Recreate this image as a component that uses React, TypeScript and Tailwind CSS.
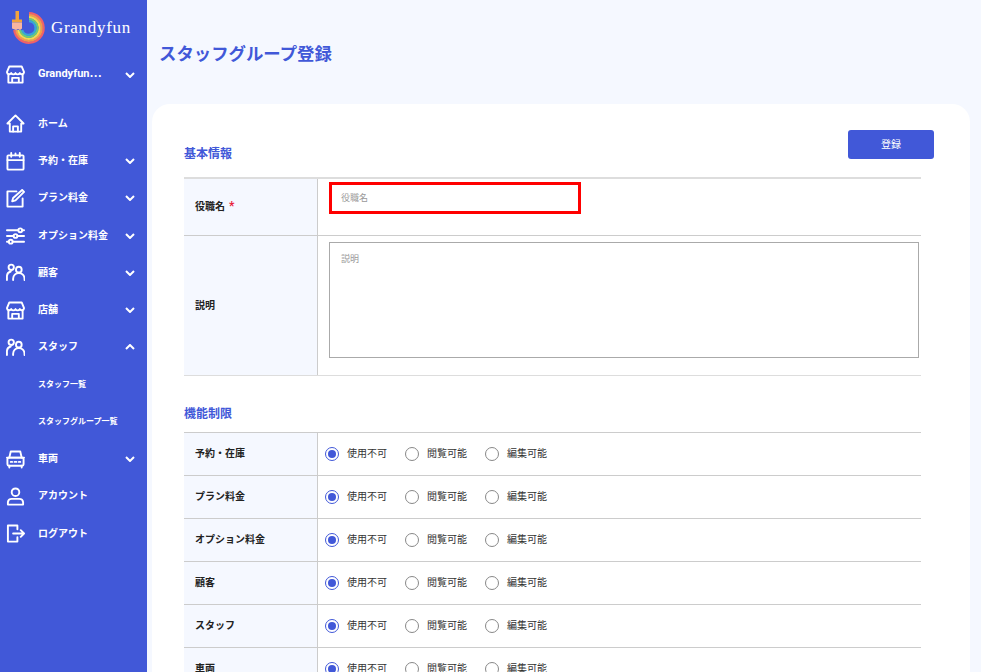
import React from "react";

const S = { fill: "none", stroke: "currentColor", strokeWidth: 2, strokeLinecap: "round" as const, strokeLinejoin: "round" as const };
const Ico = ({ children }: { children: React.ReactNode }) => (
  <svg width="19" height="19" viewBox="0 0 20 20" {...S} className="shrink-0">{children}</svg>
);
const Store = () => <Ico><path d="M3.500 1.500h13l2.500 6a2.400 2.400 0 0 1-4.500 1 2.500 2.500 0 0 1-4.500 0 2.500 2.500 0 0 1-4.500 0A2.400 2.400 0 0 1 1 7.500z" /><path d="M2.500 10v8.500h15V10M6.500 18.500v-5h7v5" /></Ico>;
const Home = () => <Ico><path d="M1.500 10 10 1.500 18.500 10H16v8.500H4V10z" /><path d="M7.500 18.500v-5.500h5v5.500" /></Ico>;
const Cal = () => <Ico><rect x="1.500" y="3.500" width="17" height="15" rx="1" /><path d="M1.500 8.500h17M5.500 1v4M14.500 1v4M10 1.500v2" /></Ico>;
const Edit = () => <Ico><path d="M17.500 10v8.500h-16v-16H11" /><path d="M17 1 19 3 10 12l-3.500 1 1-3.500z" /></Ico>;
const Sliders = () => <Ico><path d="M1 4.500h12M17 4.500h2M1 10.500h7M12 10.500h7M1 16.500h2M7 16.500h12" /><circle cx="15" cy="4.500" r="2" /><circle cx="10" cy="10.500" r="2" /><circle cx="5" cy="16.500" r="2" /></Ico>;
const People = () => <Ico><circle cx="5.500" cy="4.500" r="2.800" /><circle cx="13.500" cy="7" r="3" /><path d="M1 18v-4.500A5 5 0 0 1 5 9" /><path d="M7.500 18v-1.500a6 6 0 0 1 12 0V18" /></Ico>;
const CarI = () => <Ico><path d="M3.500 8 5 1.500h10L16.500 8" /><rect x="1.500" y="8" width="17" height="8.500" rx="1.500" /><path d="M1 8h18M3.500 16.500v2M16.500 16.500v2M5 12.500h1.500M9 12.500h2M13.500 12.500h1.500" /></Ico>;
const User = () => <Ico><circle cx="10" cy="5.500" r="4" /><path d="M2 18.500v-2.500a4 4 0 0 1 4-3.500h8a4 4 0 0 1 4 3.500v2.500z" /></Ico>;
const Logout = () => <Ico><path d="M12 5.500V1.500H2v17h10v-4.500" /><path d="M7.500 10H19M15.500 6.500 19 10l-3.500 3.500" /></Ico>;
const Chev = ({ up }: { up?: boolean }) => (
  <svg width="10" height="6" viewBox="0 0 10 6" fill="none" stroke="currentColor" strokeWidth="2" className="absolute right-[12px]">
    <path d={up ? "M1 5l4-4 4 4" : "M1 1l4 4 4-4"} />
  </svg>
);

const arc = (r: number) => {
  const cx = 29, cy = 28, a = (-5 * Math.PI) / 180;
  return `M${cx + r * Math.sin(a + 0.09)} ${cy - r * Math.cos(a + 0.09)}A${r} ${r} 0 1 1 ${cx - r} ${cy + 2}`;
};
const Logo = () => (
  <svg width="40" height="40" viewBox="10 8 40 40" className="shrink-0">
    <g fill="none" strokeWidth="2.200">
      <path d={arc(14.800)} stroke="#f0606a" />
      <path d={arc(12.800)} stroke="#f59a4a" />
      <path d={arc(10.800)} stroke="#f5d850" />
      <path d={arc(8.800)} stroke="#6ccb78" />
      <path d={arc(6.800)} stroke="#37a6d8" />
    </g>
    <rect x="15.500" y="11" width="3.500" height="9" fill="#f2a33c" />
    <rect x="12" y="19.500" width="10" height="3" fill="#f2a33c" />
    <path d="M12 22.500h10v6l-2 1.500-2-1-2 1-4-1.500z" fill="#f7b5a0" />
  </svg>
);

const nav: [string, React.ReactNode, 0 | 1 | 2][] = [
  ["ホーム", <Home />, 0],
  ["予約・在庫", <Cal />, 1],
  ["プラン料金", <Edit />, 1],
  ["オプション料金", <Sliders />, 1],
  ["顧客", <People />, 1],
  ["店舗", <Store />, 1],
  ["スタッフ", <People />, 2],
];
const nav2: [string, React.ReactNode, 0 | 1 | 2][] = [
  ["車両", <CarI />, 1],
  ["アカウント", <User />, 0],
  ["ログアウト", <Logout />, 0],
];

const Item = ({ label, icon, c, big }: { label: string; icon: React.ReactNode; c: 0 | 1 | 2; big?: boolean }) => (
  <div className="relative flex h-[37.250px] items-center pl-[6px] text-[10px] font-bold text-white">
    {icon}
    <span className={`ml-[13px] whitespace-nowrap pb-px ${big ? "text-[11px]" : ""}`}>{label}</span>
    {c ? <Chev up={c === 2} /> : null}
  </div>
);
const Sub = ({ label }: { label: string }) => (
  <div className="flex h-[37.250px] items-center pl-[38px] text-[8px] font-bold text-white whitespace-nowrap">{label}</div>
);

const Radio = ({ on, label }: { on?: boolean; label: string }) => (
  <div className="flex w-[80px] items-center text-[10px] text-[#333]">
    <span className={`flex h-[14px] w-[14px] items-center justify-center rounded-full border-[1.500px] ${on ? "border-[#4158d8]" : "border-[#888]"}`}>
      {on ? <span className="h-[8px] w-[8px] rounded-full bg-[#4158d8]" /> : null}
    </span>
    <span className="ml-[8px] mb-px whitespace-nowrap">{label}</span>
  </div>
);

const perms = ["予約・在庫", "プラン料金", "オプション料金", "顧客", "スタッフ", "車両"];

export default function App() {
  return (
    <div
      className="flex h-[672px] w-[981px] overflow-hidden bg-[#f5f8ff]"
      style={{ fontFamily: '"Roboto","Noto Sans CJK JP",sans-serif' }}
    >
      <aside className="h-full w-[147px] shrink-0 bg-[#4158d8]">
        <div className="flex h-[56px] items-center pl-[10px] pb-[1px] text-white">
          <Logo />
          <span className="ml-[1px] text-[17px] tracking-[0.700px]" style={{ fontFamily: '"Liberation Serif",serif' }}>Grandyfun</span>
        </div>
        <Item label="Grandyfun⋯" icon={<Store />} c={1} big />
        <div className="h-[12px]" />
        {nav.map(([l, i, c]) => <Item key={l} label={l} icon={i} c={c} />)}
        <Sub label="スタッフ一覧" />
        <Sub label="スタッフグループ一覧" />
        {nav2.map(([l, i, c]) => <Item key={l} label={l} icon={i} c={c} />)}
      </aside>

      <main className="min-w-0 flex-1 pl-[5px] pr-[11px]">
        <h1 className="flex h-[104px] items-center pt-[4px] pl-[7px] text-[17.400px] font-bold text-[#4158d8]">スタッフグループ登録</h1>
        <section className="h-[700px] rounded-t-[18px] bg-white pl-[32px] pt-[26px]">
          <div className="relative w-[737px]">
            <button className="absolute right-[-13px] top-0 h-[29px] w-[86px] rounded-[3px] bg-[#4158d8] text-[10px] text-white">登録</button>
            <h2 className="flex h-[47px] items-center text-[12px] font-bold text-[#4158d8]">基本情報</h2>
            <div className="border-t-2 border-[#ddd] border-b">
              <div className="flex h-[57px] border-b border-[#ccc]">
                <div className="flex w-[134px] items-center border-r border-[#ccc] bg-[#f5f8ff] pb-[2px] pl-[11px] text-[10px] font-bold text-[#222]">
                  役職名<span className="ml-[4px] text-[12px] text-[#e8203a]">*</span>
                </div>
                <div className="pl-[11px] pt-[3px]">
                  <div className="flex h-[32px] w-[252px] items-center border-[3px] border-[#f00] pl-[9px] pt-[2px] text-[9px] text-[#999]">役職名</div>
                </div>
              </div>
              <div className="flex h-[139px]">
                <div className="flex w-[134px] items-center border-r border-[#ccc] bg-[#f5f8ff] pl-[11px] text-[10px] font-bold text-[#222]">説明</div>
                <div className="pl-[11px] pt-[6px]">
                  <div className="h-[116px] w-[590px] border border-[#aaa] pl-[11px] pt-[10px] text-[9px] text-[#999]">説明</div>
                </div>
              </div>
            </div>
            <h2 className="flex h-[56px] items-center pt-[20px] text-[12px] font-bold text-[#4158d8]">機能制限</h2>
            <div className="border-t border-[#ccc]">
              {perms.map((p) => (
                <div key={p} className="flex h-[43px] border-b border-[#ccc]">
                  <div className="flex w-[134px] items-center border-r border-[#ccc] bg-[#f5f8ff] pb-px pl-[11px] text-[10px] font-bold text-[#222]">{p}</div>
                  <div className="flex items-center pl-[7px]">
                    <Radio on label="使用不可" />
                    <Radio label="閲覧可能" />
                    <Radio label="編集可能" />
                  </div>
                </div>
              ))}
            </div>
          </div>
        </section>
      </main>
    </div>
  );
}
